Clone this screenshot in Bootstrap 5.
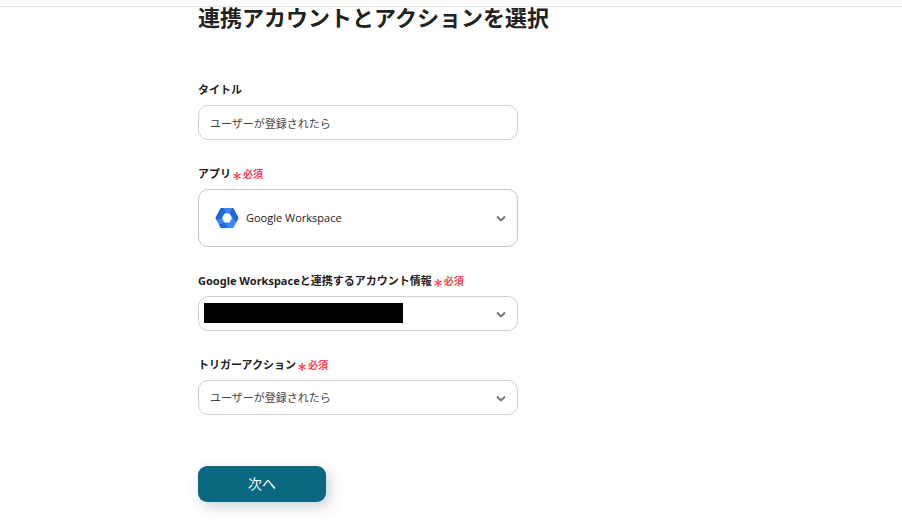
<!DOCTYPE html>
<html lang="ja">
<head>
<meta charset="utf-8">
<meta name="viewport" content="width=device-width, initial-scale=1">
<title>連携アカウントとアクションを選択</title>
<link href="https://cdn.jsdelivr.net/npm/bootstrap@5.3.0/dist/css/bootstrap.min.css" rel="stylesheet">
<style>
  body { font-family: "Noto Sans", "Noto Sans CJK JP", sans-serif; font-size: 11px; color: #222; background: #fff; }
  .top-strip { height: 7px; border-bottom: 1px solid #e4e4e4; }
  .page-column { max-width: 506px; }
  .page-title { font-size: 22px; line-height: 20px; font-weight: 700; margin: 0 0 55px; white-space: nowrap; }
  .field-stack { max-width: 320px; display: grid; gap: 26px; }
  .field-label { display: block; font-weight: 700; line-height: 16px; margin: 0 0 7px; white-space: nowrap; }
  .required-note { font-size: 10px; color: #fc4257; }
  .required-note svg { width: 8px; height: 8px; margin: 0 2px; vertical-align: -2px; }
  .field-box.form-control, .field-box.form-select { height: 35px; padding: 0 36px 0 11px; font-size: 11px; line-height: 16px; color: #444; border: 1px solid #cdd1da; border-radius: 10px; background: #fff; }
  .app-field .field-box.form-select { height: 58px; padding-left: 47px; font-family: "Open Sans", "Noto Sans CJK JP", sans-serif; color: #222; border-color: #c6c6c6; }
  .chevron { position: absolute; right: 12px; top: calc(50% - 4px); width: 10px; height: 10px; pointer-events: none; }
  .app-logo { position: absolute; left: 17px; top: calc(50% - 11px); width: 24px; height: 22px; pointer-events: none; }
  .redaction { position: absolute; left: 6px; top: 7px; width: 199px; height: 20px; background: #000; }
  .next-button.btn { width: 128px; height: 36px; margin-top: 51px; padding: 0; border: 0; border-radius: 9px; background: #0a6880; color: #fff; font-size: 14px; line-height: 20px; box-shadow: 4px 5px 14px rgba(34, 50, 84, .22); }
</style>
</head>
<body>
<div class="top-strip"></div>
<main class="page-column mx-auto pb-4">
  <h1 class="page-title">連携アカウントとアクションを選択</h1>
  <form>
    <div class="field-stack">
      <div>
        <label class="field-label" for="title">タイトル</label>
        <input class="form-control field-box" id="title" type="text" value="ユーザーが登録されたら">
      </div>
      <div class="app-field">
        <label class="field-label" for="app">アプリ<span class="required-note"><svg viewBox="0 0 8 8" fill="none" stroke="currentColor" stroke-width="1.4" aria-hidden="true"><path d="M4 0v8M.5 2l7 4M7.5 2l-7 4"/></svg>必須</span></label>
        <div class="position-relative">
          <select class="form-select field-box" id="app"><option>Google Workspace</option></select>
          <svg class="app-logo" viewBox="0 0 24 22" aria-hidden="true">
            <path fill="#4285f4" d="M6.500 1h11q.6 0 1 .6L23.300 10.500q.3.500 0 1L18.500 20.400q-.4.600-1 .6h-11q-.6 0-1-.6L.7 11.500q-.3-.5 0-1L5.500 1.600q.4-.6 1-.6z"/>
            <path fill="#1b68d6" d="M6.500 1q-.6 0-1 .6L.7 10.500q-.3.500 0 1L1.500 13 7 11l4-6.500L8.500 1zM18.500 1.600 23.300 10.500q.3.500 0 1L21.500 15 14.500 6.500 17.200 1.200q.9-.4 1.300.4zM9.500 15.500l3.500 5.500H6.500q-.6 0-1-.6L4 17.500z"/>
            <path fill="#fff" d="M9.500 6.500h5l2.500 4.500-2.500 4.500h-5L7 11z"/>
          </svg>
          <svg class="chevron" viewBox="0 0 10 10" fill="none" stroke="#737373" stroke-width="1.8" aria-hidden="true"><path d="M1 2.500 5 6.500 9 2.500"/></svg>
        </div>
      </div>
      <div>
        <label class="field-label" for="account">Google Workspaceと連携するアカウント情報<span class="required-note"><svg viewBox="0 0 8 8" fill="none" stroke="currentColor" stroke-width="1.4" aria-hidden="true"><path d="M4 0v8M.5 2l7 4M7.5 2l-7 4"/></svg>必須</span></label>
        <div class="position-relative">
          <select class="form-select field-box" id="account"><option></option></select>
          <span class="redaction"></span>
          <svg class="chevron" viewBox="0 0 10 10" fill="none" stroke="#737373" stroke-width="1.8" aria-hidden="true"><path d="M1 2.500 5 6.500 9 2.500"/></svg>
        </div>
      </div>
      <div>
        <label class="field-label" for="trigger">トリガーアクション<span class="required-note"><svg viewBox="0 0 8 8" fill="none" stroke="currentColor" stroke-width="1.4" aria-hidden="true"><path d="M4 0v8M.5 2l7 4M7.5 2l-7 4"/></svg>必須</span></label>
        <div class="position-relative">
          <select class="form-select field-box" id="trigger"><option>ユーザーが登録されたら</option></select>
          <svg class="chevron" viewBox="0 0 10 10" fill="none" stroke="#737373" stroke-width="1.8" aria-hidden="true"><path d="M1 2.500 5 6.500 9 2.500"/></svg>
        </div>
      </div>
    </div>
    <button class="btn next-button" type="button">次へ</button>
  </form>
</main>
<script src="https://cdn.jsdelivr.net/npm/bootstrap@5.3.0/dist/js/bootstrap.bundle.min.js"></script>
</body>
</html>
